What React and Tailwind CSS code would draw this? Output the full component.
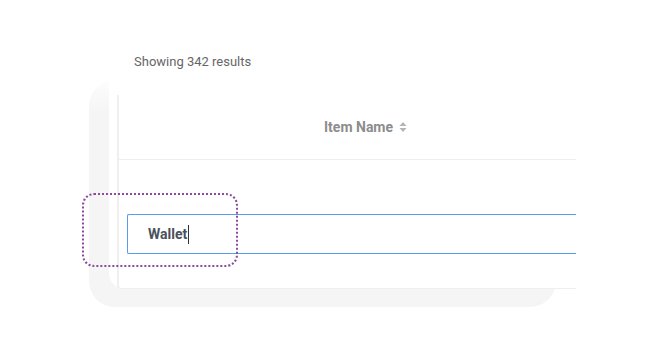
import React from "react";

const SortIcon = () => (
    <svg width="8" height="12" viewBox="0 0 8 12" className="ml-[6px]">
        <path d="M4 1 L7.5 5 H0.5 Z" fill="#b5b5b5" />
        <path d="M4 11 L7.5 7 H0.5 Z" fill="#b5b5b5" />
    </svg>
);

const App = () => {
    return (
        <div className="w-[664px] h-[356px] bg-white overflow-hidden font-['Roboto',sans-serif]">
            {/* Result count */}
            <p className="pt-[53px] pl-[134px] text-[13px] leading-[17px] text-[#666666]">
                Showing 342 results
            </p>

            {/* Card frame */}
            <div className="relative ml-[89px] mt-[10px] w-[467px] h-[227px] rounded-[26px] bg-linear-to-b from-[#fdfdfd] to-[#f5f5f5] to-[14%]">
                <div className="ml-[20px] w-[467px] h-[209px] bg-white rounded-bl-[16px] pl-[8px] pt-[15px]">
                    <div className="h-full border-l-2 border-b border-[#efefef] rounded-bl-[4px] flex flex-col">
                        {/* Header */}
                        <div className="h-[65px] border-b border-[#eeeeee] flex items-center pl-[205px]">
                            <span className="text-[14px] font-bold text-[#8c8c8c]">Item Name</span>
                            <SortIcon />
                        </div>

                        {/* Filter row */}
                        <div className="pt-[54px] pl-[8px]">
                            <div className="h-[40px] border border-r-0 border-[#5b9bef] rounded-l-[2px] flex items-center pl-[20px]">
                                <span className="text-[14px] font-bold text-[#4a505c]">Wallet</span>
                                <span className="w-px h-[19px] bg-[#333] ml-px" />
                            </div>
                        </div>
                    </div>
                </div>

                {/* Focus highlight */}
                <div className="absolute left-[-7px] top-[113px] w-[156px] h-[74px] rounded-[12px] border-2 border-dotted border-[#8a4b9e]" />
            </div>
        </div>
    );
};

export default App;
